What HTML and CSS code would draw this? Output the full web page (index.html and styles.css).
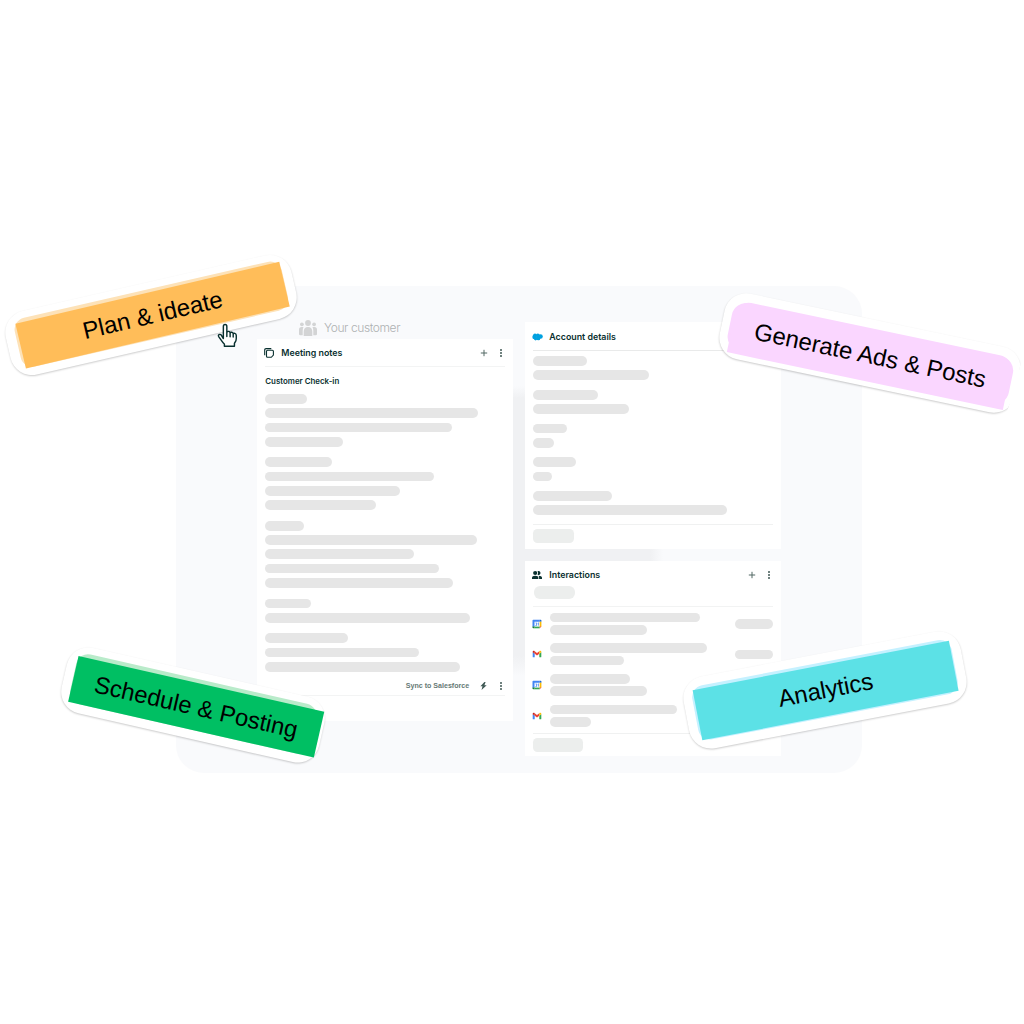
FILE: index.html
```html
<!DOCTYPE html>
<html lang="en">
<head>
<meta charset="utf-8">
<title>Customer workspace</title>
<link rel="stylesheet" href="styles.css">
</head>
<body>
<svg class="defs" aria-hidden="true">
  <symbol id="plus" viewBox="0 0 8 8"><path d="M4 .8v6.4M.8 4h6.4" stroke="#526965" stroke-width="1" fill="none"/></symbol>
  <symbol id="dots" viewBox="0 0 4 8"><g fill="#405955"><circle cx="2" cy="1" r="1"/><circle cx="2" cy="4" r="1"/><circle cx="2" cy="7" r="1"/></g></symbol>
  <symbol id="calendar" viewBox="0 0 10 10"><path fill="#fff" d="M2 2h6v6H2z"/><path fill="#4285f4" d="M.5 1.500Q.5.700 1.300.7H7.700v2H2.500v5H.5z"/><path fill="#1967d2" d="M7.700.7h.9q.8 0 .8.8v1.200H7.700z"/><path fill="#fbbc04" d="M7.700 2.700h1.700v5H7.700z"/><path fill="#34a853" d="M2.500 7.600h5.200v1.700h-5.200z"/><path fill="#188038" d="M.5 7.600h2v1.700H1.300q-.8 0-.8-.8z"/><path fill="#ea4335" d="M7.700 7.600h1.700L7.700 9.300z"/><path fill="none" stroke="#4285f4" stroke-width=".7" d="M3.500 3.900h1.200v1.200H4h.7v1.400H3.400M5.700 4.200l.8-.4v2.800"/></symbol>
  <symbol id="gmail" viewBox="0 0 10 8"><path fill="#4285f4" d="M.7 2.200l2 1.500v3.600H1.300q-.6 0-.6-.6z"/><path fill="#34a853" d="M7.300 3.700l2-1.500v4.500q0 .6-.6.6H7.300z"/><path fill="#ea4335" d="M2.700 1.300L5 3l2.300-1.700v2.500L5 5.500 2.700 3.800z"/><path fill="#c5221f" d="M.7 1.800C.7.800 1.800.500 2.700 1.300v2.500l-2-1.500z"/><path fill="#fbbc04" d="M9.300 1.800c0-1-1.100-1.300-2-.5v2.500l2-1.500z"/></symbol>
</svg>

<main class="panel">
  <section class="column column-left">
    <div class="customer">
      <svg class="people" viewBox="0 0 18 16"><g fill="#d3d4d5"><circle cx="9" cy="3" r="2.900"/><circle cx="2.900" cy="4.300" r="1.900"/><circle cx="15.100" cy="4.300" r="1.900"/><path d="M4.700 15.900v-4.200Q4.700 7 9 7t4.300 4.700v4.200zM3.700 15.200H1.200Q0 15.200 0 13.900V9.700Q0 7 2.600 7h1.900Q3.700 8.500 3.700 11zM14.300 15.200h2.500Q18 15.200 18 13.900V9.700Q18 7 15.400 7h-1.900q.8 1.500.8 4z"/></g></svg>
      <span>Your customer</span>
    </div>
    <article class="card notes">
      <header class="card-head">
        <svg class="icon" viewBox="0 0 10 10"><g fill="none" stroke="#09302f" stroke-width="1.100"><path d="M3.500 2.300h4.900q1 0 1 1v3.800L7.300 9.300H3.500q-1 0-1-1v-5q0-1 1-1z"/><path d="M.7 7.300V2Q.7.600 2.100.6h5.200"/></g></svg>
        <h2>Meeting notes</h2>
        <svg class="plus"><use href="#plus"/></svg><svg class="dots"><use href="#dots"/></svg>
      </header>
      <h3>Customer Check-in</h3>
      <div class="groups">
        <div class="group"><i style="width:42px"></i><i style="width:213px"></i><i style="width:187px"></i><i style="width:78px"></i></div>
        <div class="group"><i style="width:67px"></i><i style="width:168.500px"></i><i style="width:135px"></i><i style="width:111px"></i></div>
        <div class="group"><i style="width:39px"></i><i style="width:211.500px"></i><i style="width:149px"></i><i style="width:174px"></i><i style="width:187.300px"></i></div>
        <div class="group"><i style="width:45.500px"></i><i style="width:204.700px"></i></div>
        <div class="group"><i style="width:83px"></i><i style="width:153.500px"></i><i style="width:195px"></i></div>
      </div>
      <footer class="sync">
        <span>Sync to Salesforce</span>
        <svg class="bolt" viewBox="0 0 7 8"><path fill="#405955" d="M4.400 0L.4 4.200h2.100L1.500 8 6.700 3.200H4.400L5.600 0z"/></svg>
        <svg class="dots"><use href="#dots"/></svg>
      </footer>
    </article>
  </section>

  <section class="column column-right">
    <article class="card account">
      <header class="card-head">
        <svg class="icon cloud" viewBox="0 0 11 8"><g fill="#00a1e0"><circle cx="2.500" cy="4" r="2.200"/><circle cx="3" cy="2.500" r="1.900"/><circle cx="5.800" cy="2.500" r="1.900"/><circle cx="8.500" cy="3.500" r="2.300"/><circle cx="3.600" cy="5.600" r="1.800"/><circle cx="6.400" cy="5.400" r="1.900"/></g></svg>
        <h2>Account details</h2>
      </header>
      <div class="groups">
        <div class="group"><i style="width:53.300px"></i><i style="width:116px"></i></div>
        <div class="group"><i style="width:65px"></i><i style="width:95.300px"></i></div>
        <div class="group"><i style="width:34px"></i><i style="width:20.500px"></i></div>
        <div class="group"><i style="width:42.500px"></i><i style="width:18.500px"></i></div>
        <div class="group"><i style="width:79px"></i><i style="width:194px"></i></div>
      </div>
      <footer class="action"><b></b></footer>
    </article>

    <article class="card interactions">
      <header class="card-head">
        <svg class="icon" viewBox="0 0 10 9"><g fill="#09302f"><circle cx="3.200" cy="2.500" r="2.100"/><path d="M5.500.6a2.100 2.100 0 1 1 0 3.800q1.100-1.900 0-3.800zM0 8.500V7.200Q0 5.200 3.200 5.200t3.200 2v1.300zM7.100 8.500V7q0-1-.7-1.700Q10 5.300 10 7.300v1.200z"/></g></svg>
        <h2>Interactions</h2>
        <svg class="plus"><use href="#plus"/></svg><svg class="dots"><use href="#dots"/></svg>
      </header>
      <div class="filter"><b></b></div>
      <ul class="rows">
        <li><svg class="app"><use href="#calendar"/></svg><div class="lines"><i style="width:150.500px"></i><i style="width:97px"></i></div><i class="when"></i></li>
        <li><svg class="app"><use href="#gmail"/></svg><div class="lines"><i style="width:157px"></i><i style="width:74.500px"></i></div><i class="when"></i></li>
        <li><svg class="app"><use href="#calendar"/></svg><div class="lines"><i style="width:80.500px"></i><i style="width:97px"></i></div></li>
        <li><svg class="app"><use href="#gmail"/></svg><div class="lines"><i style="width:127px"></i><i style="width:41px"></i></div></li>
      </ul>
      <footer class="action wide"><b></b></footer>
    </article>
  </section>
</main>

<div class="sticker plan"><div class="label">Plan &amp; ideate</div></div>
<div class="sticker generate"><div class="label">Generate Ads &amp; Posts</div></div>
<div class="sticker schedule"><div class="label">Schedule &amp; Posting</div></div>
<div class="sticker analytics"><div class="label">Analytics</div></div>
<svg class="cursor" viewBox="0 0 20 24"><path d="M6.200 15V3.200q0-1.900 1.700-1.900t1.700 1.900v6q.2-1.300 1.600-1.200 1.500.1 1.600 1.500.4-.9 1.600-.7 1.300.2 1.400 1.500.5-.7 1.600-.4 1.400.4 1.400 2v3q0 2.200-1.300 3.900l-.5.900v2.800H7.200v-2.200q-1.100-.7-1.900-2l-3.500-5q-.9-1.500.2-2.200 1.100-.6 2.200.5zM9.600 9v4M12.800 9.500v3.700M15.800 10.300v3.200" fill="#fff" stroke="#09302f" stroke-width="1.400" stroke-linejoin="round" stroke-linecap="round"/></svg>
</body>
</html>
```

FILE: styles.css
```css
* { box-sizing: border-box; }
body {
  margin: 0;
  width: 1024px;
  height: 1024px;
  padding: 286px 0 0 176px;
  position: relative;
  overflow: hidden;
  background: #fff;
  font-family: Inter, "Liberation Sans", sans-serif;
  color: #09302f;
}
svg { display: block; flex: none; }
.defs { position: absolute; width: 0; height: 0; }

.panel {
  display: flex;
  gap: 12px;
  width: 686px;
  height: 487px;
  padding-left: 81px;
  border-radius: 28px;
  background:
    linear-gradient(#f9fafc, #f0f1f3 12px, #f0f1f3 270px, #f9fafc) 337px 100px / 12px 290px no-repeat,
    linear-gradient(90deg, #f0f1f3 125px, #f9fafc) 349px 262px / 138px 14px no-repeat,
    #f9fafc;
}
.column { width: 256px; display: flex; flex-direction: column; }
.column-right { padding-top: 36px; gap: 12.500px; }

.customer {
  display: flex;
  align-items: center;
  gap: 7px;
  height: 52.500px;
  padding: 30.500px 0 0 42px;
  font-size: 12px;
  letter-spacing: -.4px;
  line-height: 16px;
  font-weight: 300;
  color: #aeb1b2;
  white-space: nowrap;
}
.people { width: 18px; height: 16px; }

.card { background: #fff; padding: 0 8.300px; }
.notes { height: 382px; }
.account { height: 226.500px; }
.interactions { height: 194.700px; }

.card-head { display: flex; align-items: center; height: 28.500px; padding-top: 1px; border-bottom: 1px solid #f3f4f4; }
.account .card-head { height: 29px; border-color: #e9eaea; }
.interactions .card-head { height: 28px; padding-top: 0; border: 0; }
.icon { width: 10px; height: 10px; margin-left: -1px; margin-right: 7px; }
.cloud { width: 11px; height: 8px; margin-right: 6px; }
h2, h3 { margin: 0; font-weight: 600; white-space: nowrap; }
h2 { flex: 1; font-size: 8.850px; line-height: 12px; }
h3 { font-size: 7.900px; line-height: 12px; margin-top: 8.300px; }
.plus { width: 8px; height: 8px; margin-right: 10.500px; }
.dots { width: 4px; height: 8px; margin-right: 2px; }

i { display: block; height: 9.700px; border-radius: 5px; background: #e6e6e6; }
.groups { display: flex; flex-direction: column; gap: 10.900px; }
.group { display: flex; flex-direction: column; gap: 4.600px; }
.notes .groups { margin-top: 6.700px; }
.account .groups { gap: 9.750px; margin-top: 5.100px; }

.sync {
  display: flex;
  align-items: center;
  justify-content: flex-end;
  height: 19px;
  margin-top: 5.500px;
  padding: 0 0 1px;
  border-bottom: 1px solid #f3f4f4;
  font: bold 7.100px/10px "Liberation Sans", sans-serif;
  color: #667975;
}
.bolt { width: 7px; height: 8px; margin: 0 11.500px 0 11px; }

.action { border-top: 1px solid #f0f1f1; margin-top: 9px; padding-top: 4px; }
.action b { display: block; width: 40.500px; height: 14px; border-radius: 4.500px; background: #eceeed; margin-left: -.3px; }
.action.wide { margin-top: 6.300px; padding-top: 3.600px; }
.action.wide b { width: 50px; }
.filter { height: 17.500px; border-bottom: 1px solid #f2f3f3; display: flex; align-items: flex-start; }
.filter b { width: 41.500px; height: 13px; margin-top: -3px; margin-left: .5px; border-radius: 6px; background: #eceeed; }

.rows { list-style: none; margin: 0; padding: 6.200px 0 0; display: flex; flex-direction: column; gap: 8.600px; }
.rows li { display: flex; align-items: center; height: 22.100px; }
.app { width: 10px; height: 10px; margin: 0 7.500px 0 -1px; }
.lines { flex: 1; display: flex; flex-direction: column; gap: 2.700px; }
.when { width: 38px; }

/* Stickers float over the panel; each is placed by its centre */
.sticker {
  position: absolute;
  display: grid;
  place-items: center;
  border-radius: 22px;
  background: #fff;
  box-shadow: 0 1px 2px rgba(0, 0, 0, .2);
  transform: translate(-50%, -50%) rotate(var(--tilt));
}
.sticker::before, .sticker .label { grid-area: 1 / 1; }
.sticker::before { content: ""; border-radius: 12px; background: var(--tint); }
.label {
  position: relative;
  display: grid;
  place-items: center;
  background: var(--fill);
  font: 24px/28px "Liberation Sans", sans-serif;
  color: #000;
  white-space: nowrap;
}
.plan { --tilt: -12.900deg; --tint: #fde2b8; --fill: #ffbd59; left: 150.500px; top: 314.500px; width: 293px; height: 65px; }
.plan::before { width: 274px; height: 50px; transform: translateY(-1.200px); }
.plan .label { width: 271px; height: 45.600px; transform: translate(1.500px, 0) rotate(-.3deg); }
.generate { --tilt: 11.840deg; --tint: #fad6ff; --fill: #fad6ff; left: 870px; top: 353px; width: 302px; height: 67px; clip-path: polygon(-4px -4px, 100% -4px, 297px 100%, 297px 73px, -4px 73px); }
.generate::before { width: 287px; height: 48px; border-radius: 14px; }
.generate .label { width: 282.700px; height: 53px; border-radius: 14px 14px 0 0; transform: translate(.7px, 2px); }
.schedule { --tilt: 12.800deg; --tint: #b9ebca; --fill: #00bf63; left: 192.700px; top: 704.500px; width: 264px; height: 67px; }
.schedule::before { width: 246px; height: 51px; transform: translateY(-1px); }
.schedule .label { width: 252px; height: 47.500px; transform: translate(3.500px, 1px); font-size: 23.800px; }
.analytics { --tilt: -10.800deg; --tint: #c5f1ff; --fill: #5ce1e6; left: 825.200px; top: 690px; width: 282px; height: 73px; }
.analytics::before { width: 264px; height: 55px; transform: translateY(-.2px); }
.analytics .label { width: 261.400px; height: 50.900px; transform: translate(1px, .6px) rotate(-.15deg); }

.cursor { position: absolute; left: 217px; top: 323px; width: 20.500px; height: 25px; }
```
